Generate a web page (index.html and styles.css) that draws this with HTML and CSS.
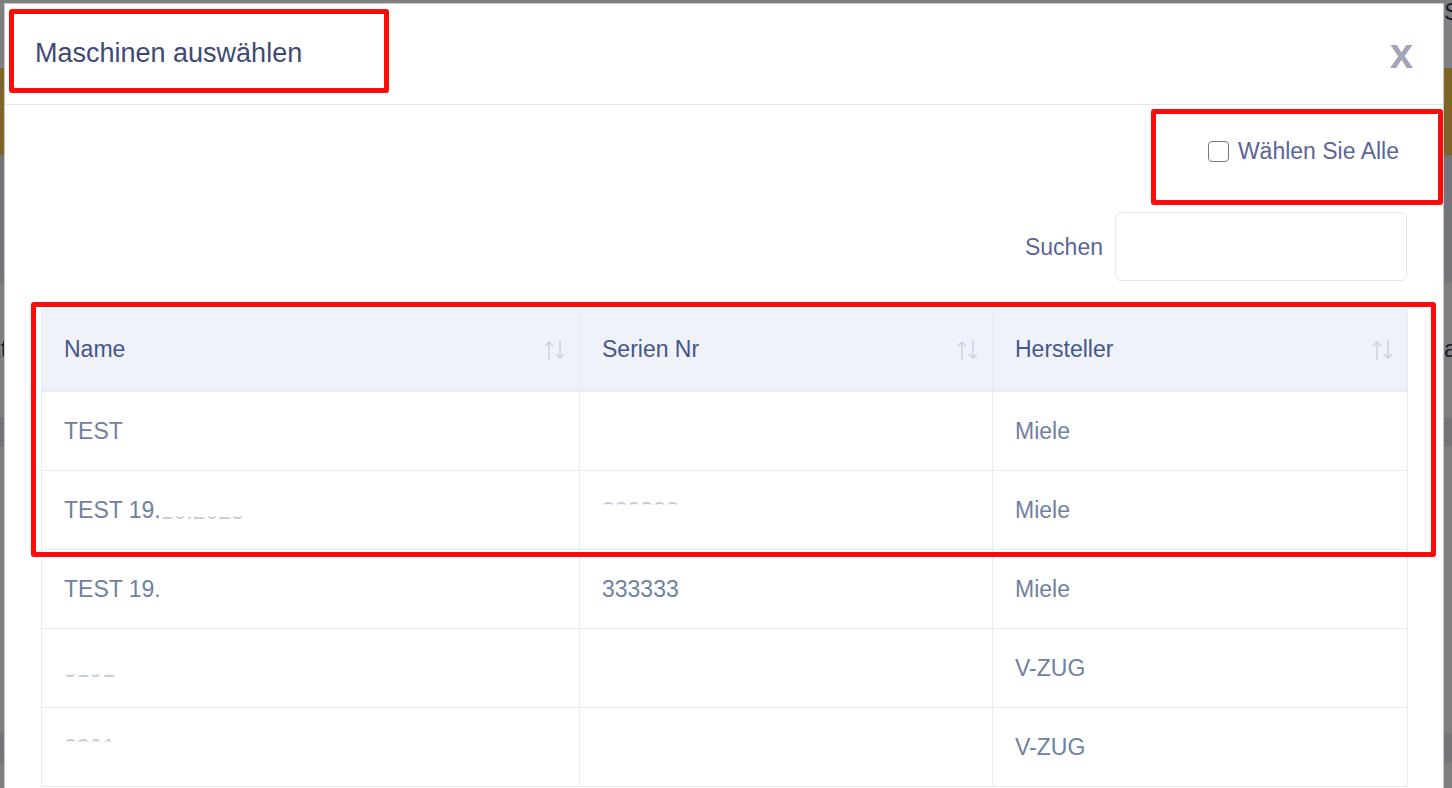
FILE: index.html
```html
<!DOCTYPE html>
<html lang="de">
<head>
    <meta charset="UTF-8">
    <meta name="viewport" content="width=device-width, initial-scale=1.0">
    <title>Maschinen auswählen</title>
    <link rel="stylesheet" href="styles.css">
</head>
<body>

    <!-- Seite hinter dem Dialog -->
    <div class="page">
        <div class="page-top"><span class="page-top-title">Standorte</span></div>
        <div class="page-banner"></div>
        <div class="page-toolbar"></div>
        <div class="page-row">
            <span class="page-cell-left">Objekt</span>
            <span class="page-cell-right">anlage</span>
        </div>
        <div class="page-row-light"></div>
        <div class="page-gap"></div>
        <div class="page-row-light"></div>
    </div>

    <div class="backdrop"></div>

    <div class="modal">
        <div class="modal-header">
            <h2 class="modal-title">Maschinen auswählen</h2>
            <span class="modal-close">x</span>
        </div>

        <div class="modal-body">
            <div class="select-all">
                <input type="checkbox" id="selectAll">
                <label for="selectAll">Wählen Sie Alle</label>
            </div>

            <div class="search">
                <label for="search">Suchen</label>
                <input type="text" id="search">
            </div>

            <table class="machines">
                <colgroup>
                    <col class="col-name">
                    <col class="col-serial">
                    <col class="col-maker">
                </colgroup>
                <thead>
                    <tr>
                        <th><div class="th-inner">Name <svg class="sort" viewBox="0 0 24 22"><path d="M6 21V3M2 7l4-4 4 4M17 1v18M13 15l4 4 4-4"/></svg></div></th>
                        <th><div class="th-inner">Serien Nr <svg class="sort" viewBox="0 0 24 22"><path d="M6 21V3M2 7l4-4 4 4M17 1v18M13 15l4 4 4-4"/></svg></div></th>
                        <th><div class="th-inner">Hersteller <svg class="sort" viewBox="0 0 24 22"><path d="M6 21V3M2 7l4-4 4 4M17 1v18M13 15l4 4 4-4"/></svg></div></th>
                    </tr>
                </thead>
                <tbody>
                    <tr>
                        <td>TEST</td>
                        <td></td>
                        <td>Miele</td>
                    </tr>
                    <tr>
                        <td>TEST 19.<span class="hidden-low">10.2023</span></td>
                        <td><span class="hidden-top">333333</span></td>
                        <td>Miele</td>
                    </tr>
                    <tr>
                        <td>TEST 19.</td>
                        <td>333333</td>
                        <td>Miele</td>
                    </tr>
                    <tr>
                        <td><span class="hidden-low">5191</span></td>
                        <td></td>
                        <td>V-ZUG</td>
                    </tr>
                    <tr>
                        <td><span class="hidden-top">2301</span></td>
                        <td></td>
                        <td>V-ZUG</td>
                    </tr>
                </tbody>
            </table>
        </div>
    </div>

    <!-- Markierungen -->
    <div class="mark mark-title"></div>
    <div class="mark mark-select"></div>
    <div class="mark mark-table"></div>

</body>
</html>
```

FILE: styles.css
```css
html, body {
    margin: 0;
    padding: 0;
    height: 100%;
    overflow: hidden;
}

body {
    font-family: "Liberation Sans", Arial, sans-serif;
    background-color: #ffffff;
}

/* Seite im Hintergrund */
.page {
    width: 100%;
}

.page-top {
    height: 68px;
    display: flex;
    justify-content: flex-end;
}

.page-top-title {
    width: 8px;
    overflow: hidden;
    white-space: nowrap;
    font-size: 24px;
    line-height: 24px;
    color: #2c3a66;
}

.page-banner {
    height: 87px;
    background-color: #fec84e;
}

.page-toolbar {
    height: 127px;
    background-color: #e4e8f2;
}

.page-row {
    height: 136px;
    padding-top: 52px;
    box-sizing: border-box;
    display: flex;
    justify-content: space-between;
    font-size: 24px;
    line-height: 30px;
    color: #2c3a66;
}

.page-cell-left {
    margin-left: -62px;
}

.page-cell-right {
    width: 8px;
    overflow: hidden;
    white-space: nowrap;
}

.page-row-light {
    height: 28px;
    background-color: #e4e8f2;
}

.page-gap {
    height: 288px;
}

.backdrop {
    position: fixed;
    inset: 0;
    background-color: rgba(0, 0, 0, 0.5);
}

/* Dialog */
.modal {
    position: fixed;
    left: 4px;
    top: 3px;
    width: 1440px;
    height: 900px;
    box-sizing: border-box;
    background-color: #ffffff;
    border: 1px solid #c9c9cc;
}

.modal-header {
    display: flex;
    justify-content: space-between;
    align-items: flex-start;
    height: 101px;
    box-sizing: border-box;
    padding: 36px 30px 0 30px;
    border-bottom: 1px solid #e2e4f0;
}

.modal-title {
    margin: 0;
    font-size: 27px;
    line-height: 27px;
    font-weight: normal;
    color: #3e4a73;
}

.modal-close {
    margin-top: -7px;
    font-size: 42px;
    line-height: 42px;
    font-weight: bold;
    color: #a3a6b9;
    cursor: pointer;
}

.modal-body {
    padding: 0 36px;
}

.select-all {
    display: flex;
    justify-content: flex-end;
    align-items: center;
    gap: 9px;
    height: 28px;
    margin-top: 32px;
    padding-right: 8px;
}

.select-all input {
    appearance: none;
    width: 21px;
    height: 21px;
    margin: 0;
    box-sizing: border-box;
    border: 1.5px solid #777777;
    border-radius: 4px;
    background-color: #ffffff;
}

.select-all label,
.search label {
    font-size: 23px;
    line-height: 28px;
    color: #5b6597;
}

.search {
    display: flex;
    justify-content: flex-end;
    align-items: center;
    gap: 12px;
    margin-top: 47px;
}

.search input {
    width: 292px;
    height: 69px;
    box-sizing: border-box;
    border: 1px solid #e4e7f0;
    border-radius: 6px;
    font-size: 20px;
    padding: 0 12px;
}

/* Tabelle */
.machines {
    width: 1366px;
    margin-top: 28px;
    border-collapse: collapse;
    table-layout: fixed;
    font-size: 23px;
}

.col-name { width: 538px; }
.col-serial { width: 413px; }
.col-maker { width: 415px; }

.machines th {
    height: 79px;
    padding: 0 12px 0 22px;
    background-color: #eff3f9;
    border: 1px solid #e6ebf4;
    border-bottom: 3px solid #e6edf7;
    font-weight: normal;
    text-align: left;
    color: #47568c;
}

.th-inner {
    display: flex;
    justify-content: space-between;
    align-items: center;
}

.sort {
    width: 24px;
    height: 22px;
    fill: none;
    stroke: #c8d2e3;
    stroke-width: 1.5;
}

.machines td {
    height: 78px;
    padding: 0 22px;
    border: 1px solid #e7ecf4;
    color: #6f81a1;
    white-space: nowrap;
    overflow: hidden;
}

/* unkenntlich gemachte Werte: nur ein Streifen bleibt sichtbar */
.hidden-low {
    display: inline-block;
    line-height: 26px;
    vertical-align: bottom;
    color: #c3ccda;
    clip-path: inset(19px 0 4px 0);
}

.hidden-top {
    display: inline-block;
    line-height: 26px;
    vertical-align: bottom;
    color: #c3ccda;
    clip-path: inset(4px 0 19px 0);
}

/* rote Rahmen */
.mark {
    position: absolute;
    box-sizing: border-box;
    border: 5px solid #ff0a0a;
    border-radius: 3px;
}

.mark-title {
    left: 9px;
    top: 9px;
    width: 380px;
    height: 84px;
}

.mark-select {
    left: 1151px;
    top: 109px;
    width: 292px;
    height: 96px;
}

.mark-table {
    left: 31px;
    top: 302px;
    width: 1405px;
    height: 255px;
}
```
